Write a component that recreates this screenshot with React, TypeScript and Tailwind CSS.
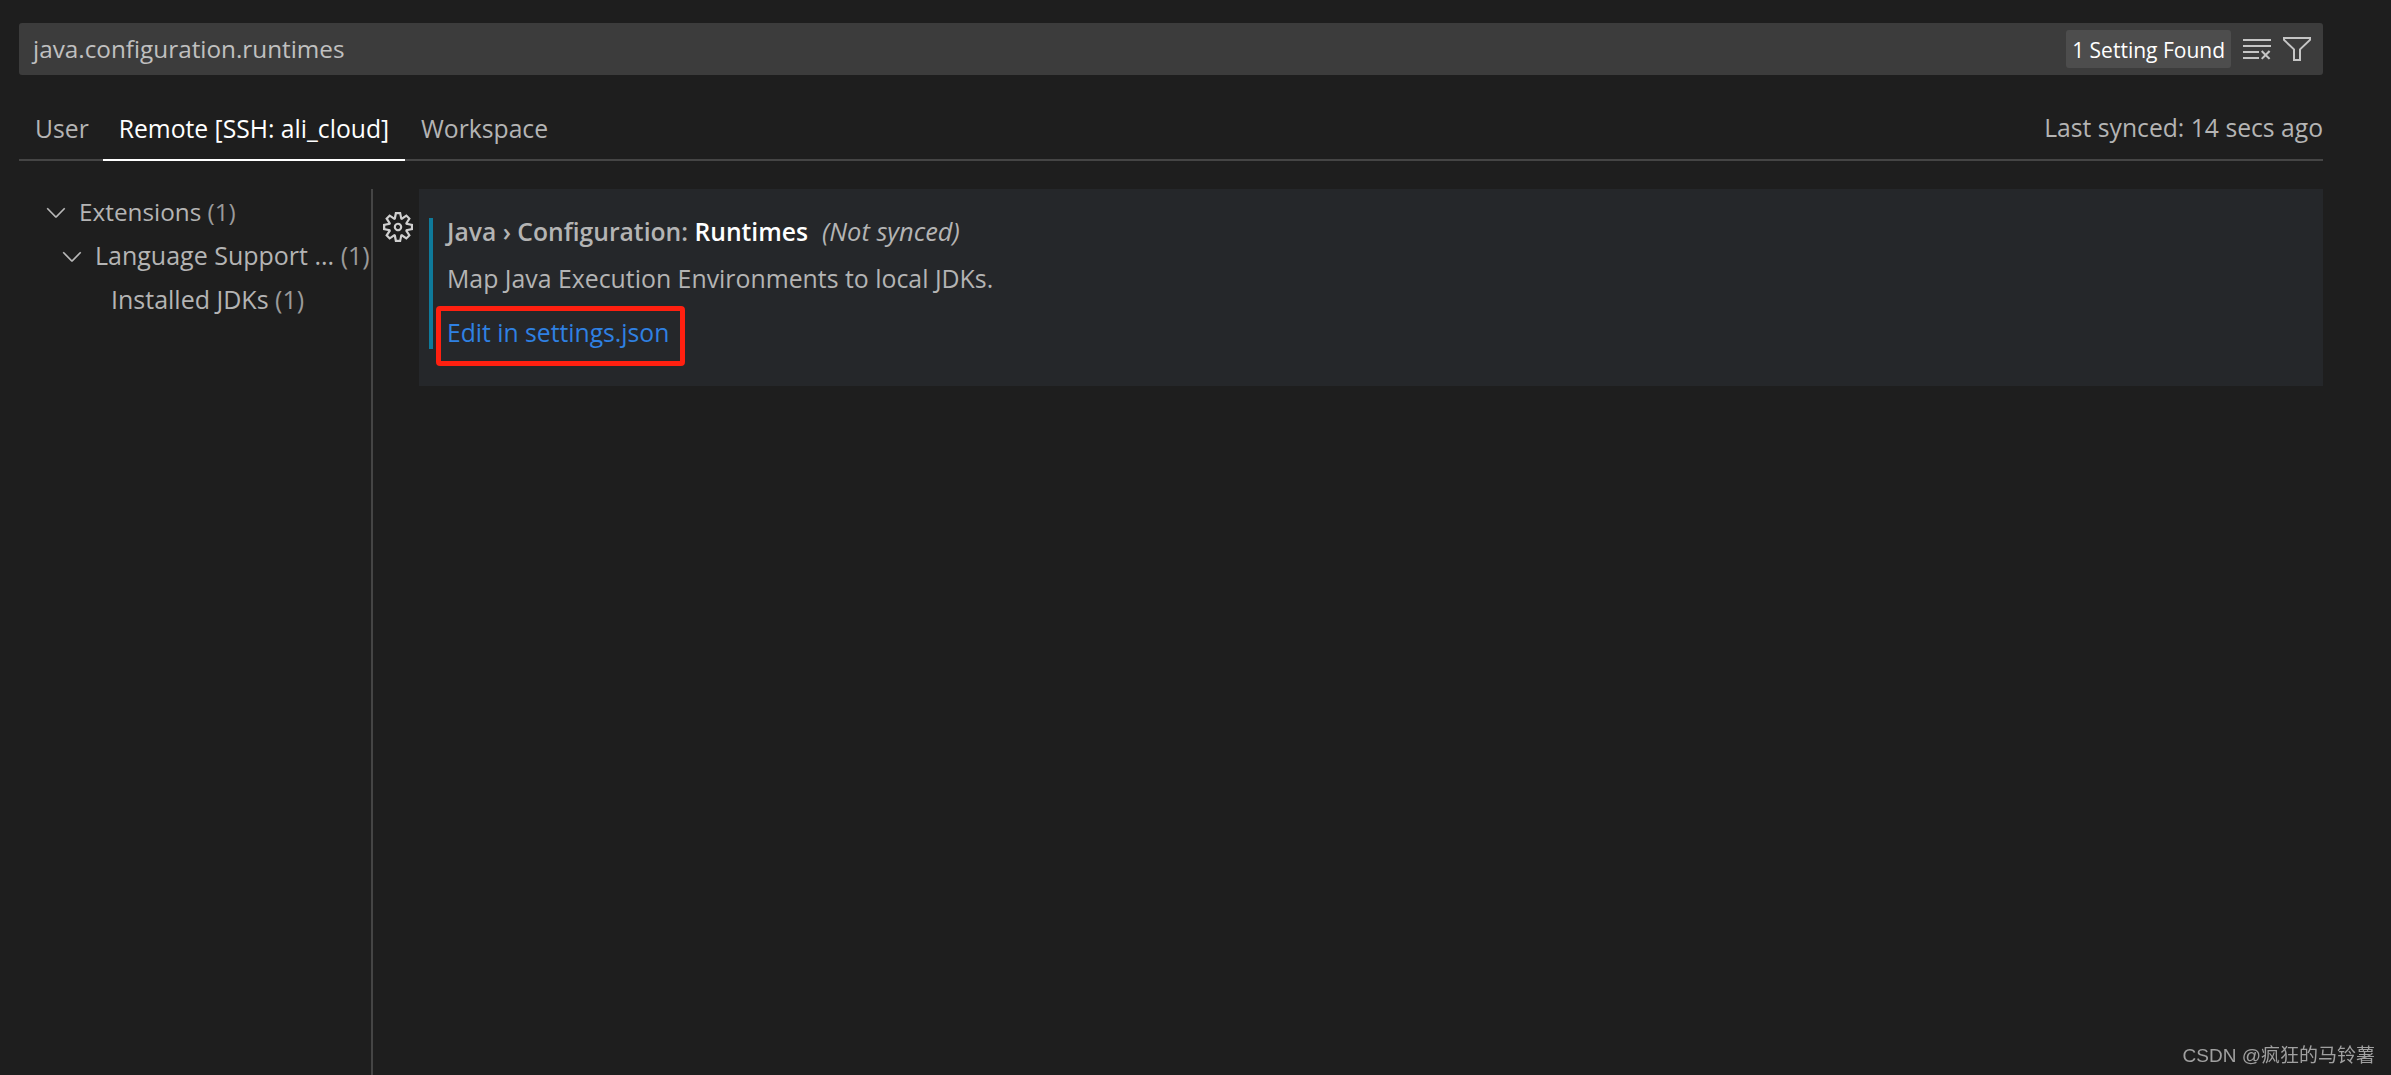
import React from "react";
import { VscChevronDown, VscClearAll, VscFilter, VscSettingsGear } from "react-icons/vsc";

const font = "font-['Open_Sans','Noto_Sans',sans-serif]";

export default function App() {
  return (
    <div className={`relative h-[1075px] w-[2391px] overflow-hidden bg-[#1e1e1e] pl-[19px] pr-[68px] pt-[23px] text-[#b4b4b4] ${font}`}>
      <div className="flex h-[52px] items-center justify-between rounded-[3px] bg-[#3c3c3c] pl-[14px] pr-[8px]">
        <span className="pt-[1px] text-[24.3px] text-[#c0c0c0]">java.configuration.runtimes</span>
        <div className="flex items-center">
          <span className="mr-[10px] flex h-[38px] items-center rounded-[3px] bg-[#4d4d4d] pl-[6px] pr-[6px] pt-[4px] text-[21px] text-white">1 Setting Found</span>
          <VscClearAll className="mr-[8px] h-[32px] w-[32px] text-[#c5c5c5]" />
          <VscFilter className="mr-[2px] h-[32px] w-[32px] text-[#c5c5c5]" />
        </div>
      </div>
      <div className="flex h-[86px] items-end justify-between border-b-2 border-[#454545]">
        <div className="flex text-[24.7px]">
          <span className="-mb-[2px] flex h-[53px] items-start pl-[16px] pr-[14px] pt-[2px]">User</span>
          <span className="-mb-[2px] flex h-[53px] items-start border-b-2 border-white px-[16px] pt-[2px] text-white">Remote [SSH: ali_cloud]</span>
          <span className="-mb-[2px] flex h-[53px] items-start px-[16px] pt-[2px]">Workspace</span>
        </div>
        <span className="flex h-[53px] items-start pt-[3px] text-[24.7px]">Last synced: 14 secs ago</span>
      </div>
      <div className="mt-[28px] flex h-[886px]">
        <div className="h-full w-[354px] border-r-2 border-[#454545] pt-[1px]">
          <div className="flex h-[44px] items-center pl-[22px] text-[24.3px]">
            <VscChevronDown className="mr-[8px] h-[30px] w-[30px] text-[#b8b8b8]" />
            <span>Extensions <span className="text-[#9a9a9a]">(1)</span></span>
          </div>
          <div className="flex h-[44px] items-center whitespace-nowrap pl-[38px] text-[25px]">
            <VscChevronDown className="mr-[8px] h-[30px] w-[30px] text-[#b8b8b8]" />
            <span>Language Support ... <span className="text-[#9a9a9a]">(1)</span></span>
          </div>
          <div className="flex h-[44px] items-center pl-[92px] text-[25px]">
            <span>Installed JDKs <span className="text-[#9a9a9a]">(1)</span></span>
          </div>
        </div>
        <div className="w-[46px] shrink-0 pt-[23px] pl-[10px]">
          <VscSettingsGear className="h-[30px] w-[30px] text-[#d0d0d0]" />
        </div>
        <div className="relative h-[197px] flex-1 bg-[#25272a] pl-[10px] pt-[29px]">
          <div className="h-[131px] border-l-[4px] border-[#0e7a9b] pl-[14px] text-[24.7px]">
            <div className="flex h-[27px] items-center whitespace-nowrap">
              <span className="font-semibold">Java › Configuration: <span className="text-white">Runtimes</span></span>
              <span className="ml-[14px] text-[25.4px] italic">(Not synced)</span>
            </div>
            <div className="mt-[20px] flex h-[27px] items-center text-[24.85px]">Map Java Execution Environments to local JDKs.</div>
            <div className="relative mt-[27px] flex h-[27px] items-center text-[#2f81e3]">
              <span>Edit in settings.json</span>
              <div className="absolute -top-[13px] -left-[11px] h-[60px] w-[249px] rounded-[4px] border-[5px] border-[#ff2010]" />
            </div>
          </div>
        </div>
      </div>
      <div className="absolute bottom-[5px] right-[16px] text-[19px] text-[#a0a0a0] blur-[0.4px] font-['Liberation_Sans','Noto_Sans_CJK_SC',sans-serif]">CSDN @疯狂的马铃薯</div>
    </div>
  );
}
